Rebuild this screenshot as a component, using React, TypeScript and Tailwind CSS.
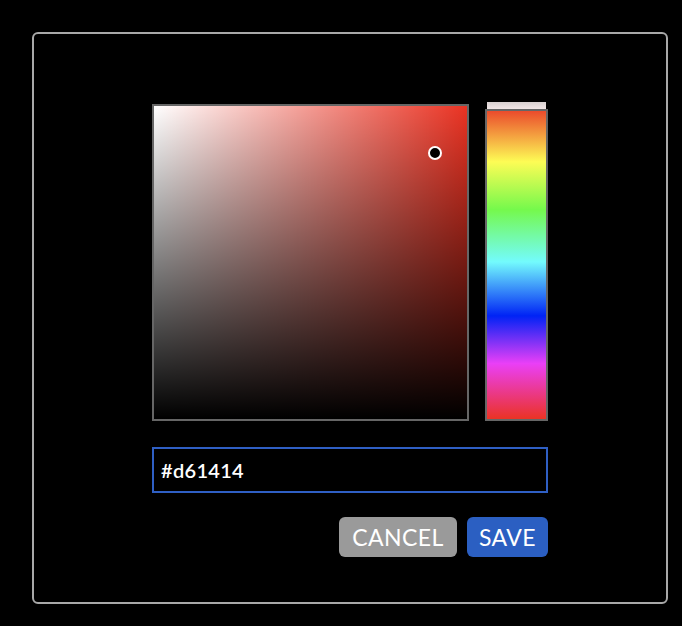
export default function App() {
  return (
    <div className="min-h-[626px] w-[682px] bg-black pl-[32px] pt-[32px] font-['Lato',sans-serif]">
      <div className="flex h-[572px] w-[636px] flex-col items-center rounded-[6px] border-2 border-[#a8a8a8] pt-[70px]">
        <div className="flex w-[396px] items-end gap-[16px]">
          {/* saturation / value square */}
          <div className="relative h-[317px] w-[317px] border-2 border-[#666666] bg-[#ea3323]">
            <div className="absolute inset-0 bg-gradient-to-r from-white to-transparent" />
            <div className="absolute inset-0 bg-gradient-to-b from-transparent to-black" />
            <div className="absolute left-[274px] top-[40px] h-[14px] w-[14px] rounded-full border-2 border-white bg-black" />
          </div>
          {/* hue slider */}
          <div className="relative h-[312px] w-[63px] border-2 border-[#666666] bg-[linear-gradient(to_bottom,#eb4b2c_0%,#fdfc55_16.5%,#75f94c_32%,#73fbfd_49%,#0023f5_66.5%,#ea3ff7_82%,#eb3324_100%)]">
            <div className="absolute -top-[9px] left-0 right-0 h-[7px] bg-[linear-gradient(to_bottom,#d8d0d0,#f2e6e6)]" />
          </div>
        </div>
        <div className="mt-[26px] flex h-[46px] w-[396px] items-center border-2 border-[#2f5fc4] px-[7px] text-[20px] font-semibold tracking-[0.3px] text-white">
          #d61414
        </div>
        <div className="mt-[24px] flex w-[396px] justify-end gap-[10px]">
          <button className="h-[40px] w-[118px] rounded-[6px] bg-[#9a9a9a] text-[23px] leading-none tracking-[0.4px] text-white">
            CANCEL
          </button>
          <button className="h-[40px] w-[81px] rounded-[6px] bg-[#2b5fc2] text-[23px] leading-none tracking-[0.4px] text-white">
            SAVE
          </button>
        </div>
      </div>
    </div>
  )
}
